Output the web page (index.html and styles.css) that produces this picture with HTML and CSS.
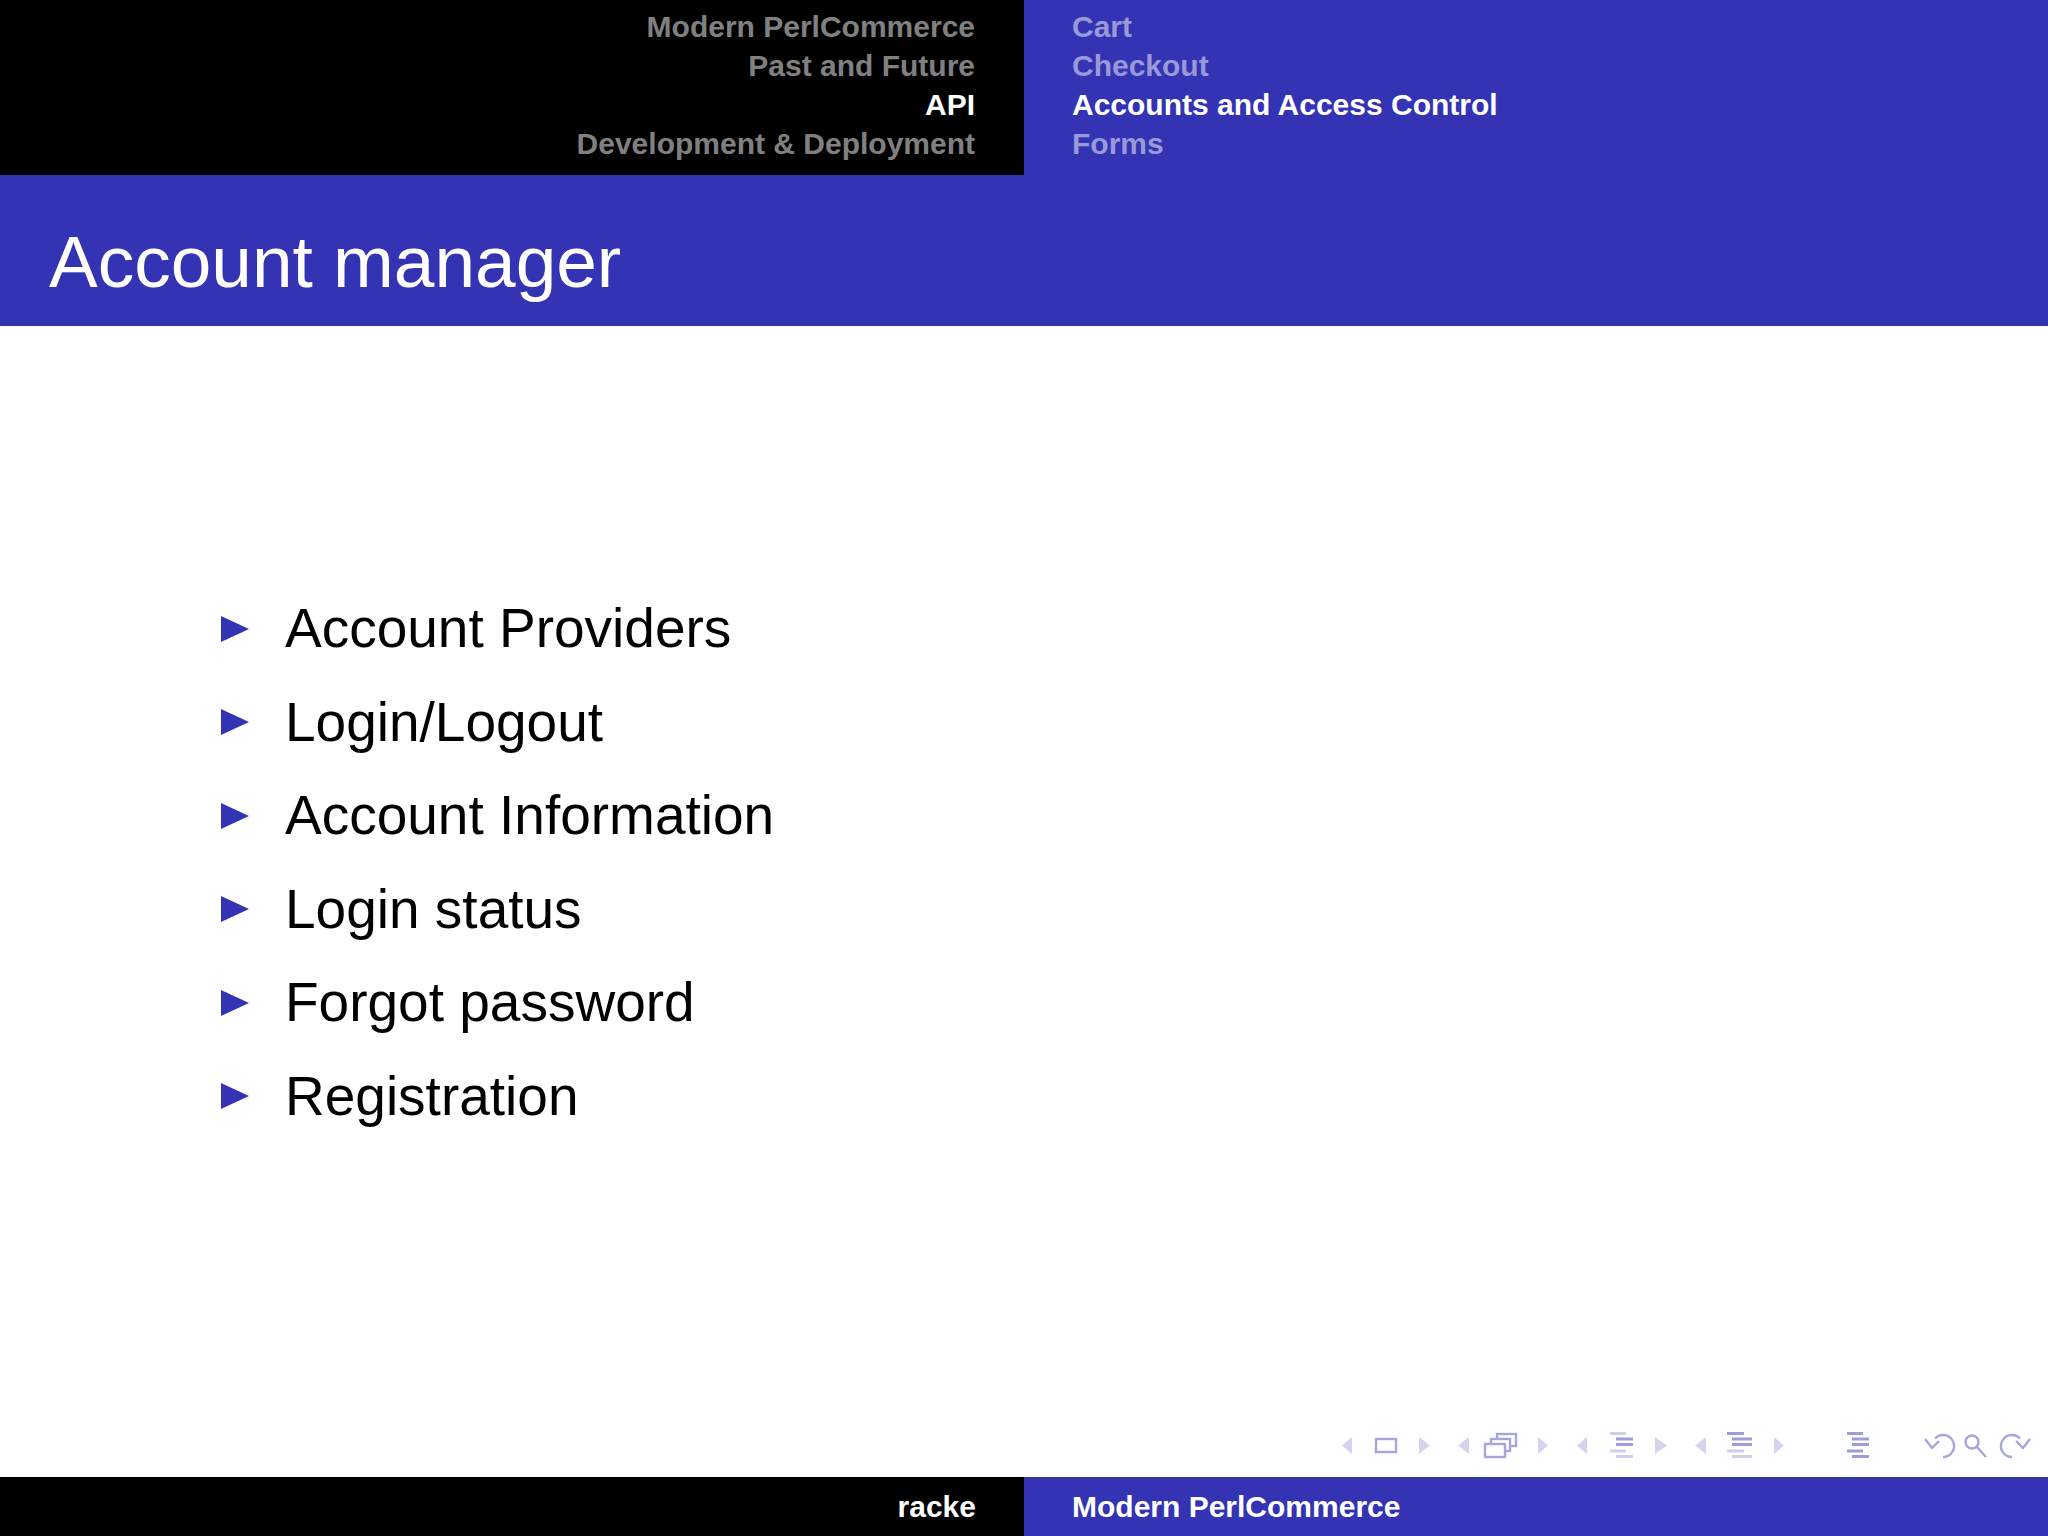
FILE: index.html
```html
<!DOCTYPE html>
<html lang="en">
<head>
<meta charset="utf-8">
<title>Account manager</title>
<link rel="stylesheet" href="styles.css">
</head>
<body>
<div class="slide">
  <header class="headline">
    <div class="sections">
      <div class="nav-item">Modern PerlCommerce</div>
      <div class="nav-item">Past and Future</div>
      <div class="nav-item current">API</div>
      <div class="nav-item">Development &amp; Deployment</div>
    </div>
    <div class="subsections">
      <div class="nav-item">Cart</div>
      <div class="nav-item">Checkout</div>
      <div class="nav-item current">Accounts and Access Control</div>
      <div class="nav-item">Forms</div>
    </div>
  </header>
  <div class="frametitle">Account manager</div>
  <main class="body">
    <ul class="items">
      <li><span class="bullet"></span><span>Account Providers</span></li>
      <li><span class="bullet"></span><span>Login/Logout</span></li>
      <li><span class="bullet"></span><span>Account Information</span></li>
      <li><span class="bullet"></span><span>Login status</span></li>
      <li><span class="bullet"></span><span>Forgot password</span></li>
      <li><span class="bullet"></span><span>Registration</span></li>
    </ul>
    <div class="navsymbols">
      <svg class="navsvg" width="692" height="28" viewBox="0 0 692 28">
        <g class="arrow">
          <polygon points="2,14.5 12,6 12,23"/>
          <polygon points="79,6 90,14.5 79,23"/>
          <polygon points="118,14.5 129,6 129,23"/>
          <polygon points="198,6 208,14.5 198,23"/>
          <polygon points="237,14.5 247,6 247,23"/>
          <polygon points="315,6 327,14.5 315,23"/>
          <polygon points="355,14.5 366,6 366,23"/>
          <polygon points="434,6 444,14.5 434,23"/>
        </g>
        <g class="icon">
          <rect x="36" y="8" width="20" height="13"/>
          <rect x="157" y="3" width="19" height="12" fill="#fff"/>
          <rect x="151" y="8" width="19" height="12" fill="#fff"/>
          <rect x="145" y="13" width="20" height="13" fill="#fff"/>
        </g>
        <g class="lines">
          <line class="lt" x1="270" y1="2.5" x2="286" y2="2.5"/>
          <line class="dk" x1="276" y1="8" x2="293" y2="8"/>
          <line class="dk" x1="276" y1="13.5" x2="293" y2="13.5"/>
          <line class="lt" x1="270" y1="20" x2="286" y2="20"/>
          <line class="lt" x1="276" y1="25.5" x2="293" y2="25.5"/>

          <line class="dk" x1="387" y1="2.5" x2="404" y2="2.5"/>
          <line class="dk" x1="392" y1="8" x2="412" y2="8"/>
          <line class="dk" x1="392" y1="13.5" x2="412" y2="13.5"/>
          <line class="lt" x1="387" y1="20" x2="404" y2="20"/>
          <line class="lt" x1="392" y1="25.5" x2="412" y2="25.5"/>

          <line class="dk" x1="507" y1="2.5" x2="523" y2="2.5"/>
          <line class="dk" x1="512" y1="8" x2="529" y2="8"/>
          <line class="dk" x1="512" y1="13.5" x2="529" y2="13.5"/>
          <line class="dk" x1="507" y1="20" x2="523" y2="20"/>
          <line class="dk" x1="512" y1="25.5" x2="529" y2="25.5"/>
        </g>
        <g class="icon">
          <path d="M595 7.5 A11 11 0 1 1 603 26"/>
          <path d="M585 8 L592 17 L599 10"/>
          <circle cx="632" cy="11" r="6.5"/>
          <path d="M637 16 L646 26"/>
          <path d="M680 7.5 A11 11 0 1 0 672 26"/>
          <path d="M690 8 L683 17 L676 10"/>
        </g>
      </svg>
    </div>
  </main>
  <footer class="footline">
    <div class="author">racke</div>
    <div class="shorttitle">Modern PerlCommerce</div>
  </footer>
</div>
</body>
</html>
```

FILE: styles.css
```css
html, body {
  margin: 0;
  padding: 0;
  background: #ffffff;
}

body {
  width: 2048px;
  height: 1536px;
  overflow: hidden;
  font-family: "Liberation Sans", Arial, Helvetica, sans-serif;
}

.slide {
  width: 2048px;
  height: 1536px;
  display: flex;
  flex-direction: column;
}

.headline {
  height: 175px;
  display: grid;
  grid-template-columns: 1024px 1024px;
  font-size: 30px;
  font-weight: bold;
  line-height: 39px;
}

.sections {
  background: #000000;
  color: #808080;
  text-align: right;
  padding: 7px 49px 0 0;
}

.subsections {
  background: #3333b3;
  color: #9999d9;
  padding: 7px 0 0 48px;
}

.nav-item {
  white-space: nowrap;
}

.sections .current,
.subsections .current {
  color: #ffffff;
}

.frametitle {
  height: 151px;
  box-sizing: border-box;
  background: #3333b3;
  color: #ffffff;
  font-size: 73px;
  line-height: 73px;
  padding: 50px 0 0 49px;
}

.body {
  flex: 1;
  display: flex;
  flex-direction: column;
}

.items {
  list-style: none;
  margin: 256px 0 0 0;
  padding: 0 0 0 221px;
  font-size: 55px;
  line-height: 93.5px;
  color: #000000;
}

.items li {
  display: flex;
  align-items: center;
  height: 93.5px;
}

.bullet {
  width: 0;
  height: 0;
  border-top: 13px solid transparent;
  border-bottom: 13px solid transparent;
  border-left: 28px solid #3333b3;
  margin-right: 36px;
  flex: none;
}

.navsymbols {
  margin-top: auto;
  display: flex;
  justify-content: flex-end;
  padding: 0 16px 18px 0;
}

.navsvg {
  display: block;
}

.arrow polygon {
  fill: #d4d4ee;
}

.icon rect,
.icon path,
.icon circle {
  fill: none;
  stroke: #a6a6dc;
  stroke-width: 2.4;
}

.icon rect[fill] {
  fill: #ffffff;
}

.lines line {
  stroke-width: 3;
}

.lines .dk {
  stroke: #9d9dd9;
}

.lines .lt {
  stroke: #cfcfeb;
}

.footline {
  height: 59px;
  display: grid;
  grid-template-columns: 1024px 1024px;
  font-size: 30px;
  font-weight: bold;
  line-height: 59px;
  color: #ffffff;
}

.author {
  background: #000000;
  text-align: right;
  padding-right: 48px;
}

.shorttitle {
  background: #3333b3;
  padding-left: 48px;
}
```
